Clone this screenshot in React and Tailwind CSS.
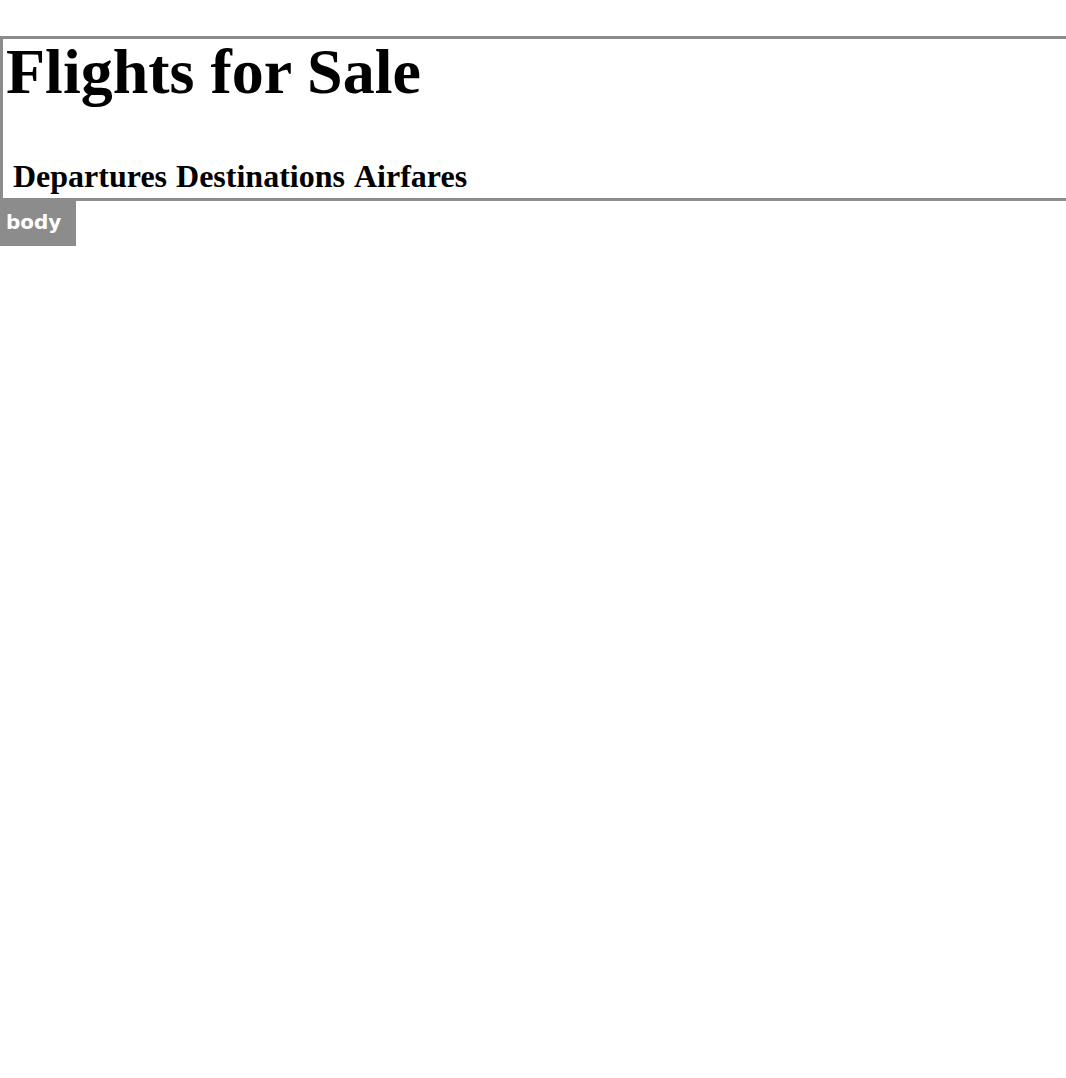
export default function App() {
  return (
    <div className="min-h-[1078px] bg-white text-black">
      <div className="pt-[36px]">
        <header className="border-t-[3px] border-l-[3px] border-b-[3px] border-[#8c8c8c] h-[165px] flex flex-col justify-between">
          <h1 className="text-[64px] leading-[66px] font-bold pl-[3px] font-['Liberation_Serif',serif]">
            Flights for Sale
          </h1>
          <nav className="flex gap-[9px] pl-[10px] pb-[3px] text-[32px] font-bold leading-[normal] font-['Liberation_Serif',serif]">
            <span>Departures</span>
            <span>Destinations</span>
            <span>Airfares</span>
          </nav>
        </header>
        <div className="inline-block align-top bg-[#8c8c8c] text-white font-bold text-[20px] h-[45px] w-[76px] pl-[6px] pt-[6px] font-['DejaVu_Sans',sans-serif]">
          body
        </div>
      </div>
    </div>
  );
}
